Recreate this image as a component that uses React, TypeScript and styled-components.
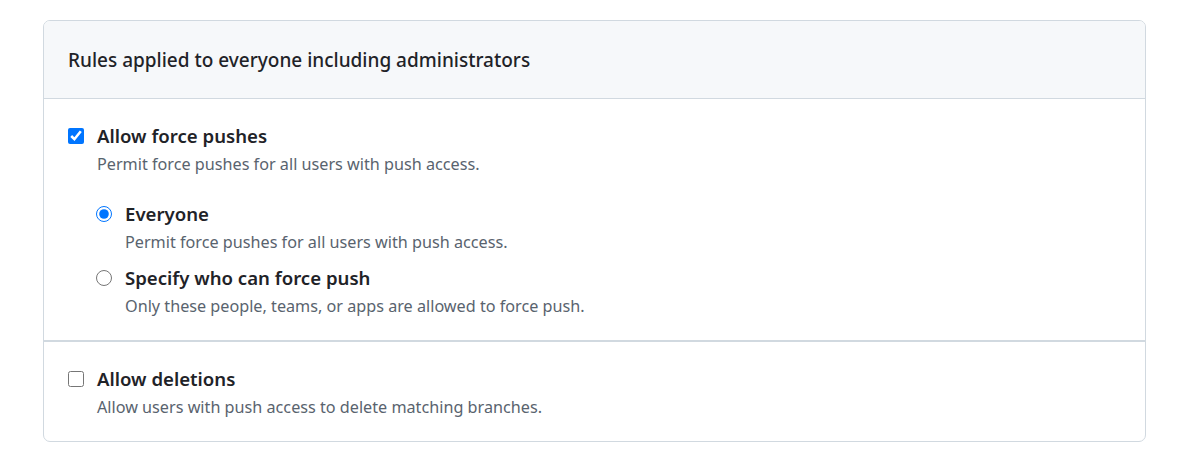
import * as React from 'react';
import styled, { createGlobalStyle } from 'styled-components';

const GlobalStyle = createGlobalStyle`
    html, body {
        margin: 0;
        padding: 0;
        background: #ffffff;
    }
    body {
        font-family: "Noto Sans", "Open Sans", sans-serif;
        color: #1f2328;
    }
`;

const Page = styled.div`
    padding: 20px 40px 16px 43px;
`;

const Box = styled.div`
    border: 1px solid #d1d9e0;
    border-radius: 7px;
    overflow: hidden;
`;

const BoxHeader = styled.div`
    background: #f6f8fa;
    border-bottom: 1px solid #d1d9e0;
    padding: 0 24px;
    height: 77px;
    display: flex;
    align-items: center;
`;

const HeaderTitle = styled.h3`
    margin: 0;
    font-size: 19px;
    font-weight: 500;
`;

const Section = styled.div<{ $last?: boolean }>`
    padding: 22px 24px 21px;
    border-bottom: ${p => (p.$last ? 'none' : '2px solid #d1d9e0')};
`;

const OptionRow = styled.label`
    display: grid;
    grid-template-columns: 16px 1fr;
    column-gap: 13px;
    cursor: pointer;
`;

const NestedGroup = styled.div`
    margin: 22px 0 0 28px;
    display: flex;
    flex-direction: column;
    gap: 8px;
`;

const ControlCell = styled.div`
    padding-top: 7px;
`;

const Control = styled.input`
    display: block;
    width: 16px;
    height: 16px;
    margin: 0;
    accent-color: #0075ff;
`;

const Label = styled.div`
    font-size: 18.6px;
    font-weight: 600;
    line-height: 30px;
`;

const Note = styled.div`
    font-size: 16.2px;
    color: #59636e;
    line-height: 26px;
`;

interface IOptionProps {
    type: 'checkbox' | 'radio';
    checked: boolean;
    name?: string;
    label: string;
    note: string;
}

const Option: React.FC<IOptionProps> = props => (
    <OptionRow>
        <ControlCell>
            <Control type={props.type} name={props.name} defaultChecked={props.checked} />
        </ControlCell>
        <div>
            <Label>{props.label}</Label>
            <Note>{props.note}</Note>
        </div>
    </OptionRow>
);

const App = () => (
    <>
        <GlobalStyle />
        <Page>
            <Box>
                <BoxHeader>
                    <HeaderTitle>Rules applied to everyone including administrators</HeaderTitle>
                </BoxHeader>

                <Section>
                    <Option
                        type="checkbox"
                        checked
                        label="Allow force pushes"
                        note="Permit force pushes for all users with push access."
                    />
                    <NestedGroup>
                        <Option
                            type="radio"
                            name="force-push"
                            checked
                            label="Everyone"
                            note="Permit force pushes for all users with push access."
                        />
                        <Option
                            type="radio"
                            name="force-push"
                            checked={false}
                            label="Specify who can force push"
                            note="Only these people, teams, or apps are allowed to force push."
                        />
                    </NestedGroup>
                </Section>

                <Section $last>
                    <Option
                        type="checkbox"
                        checked={false}
                        label="Allow deletions"
                        note="Allow users with push access to delete matching branches."
                    />
                </Section>
            </Box>
        </Page>
    </>
);

export default App;
